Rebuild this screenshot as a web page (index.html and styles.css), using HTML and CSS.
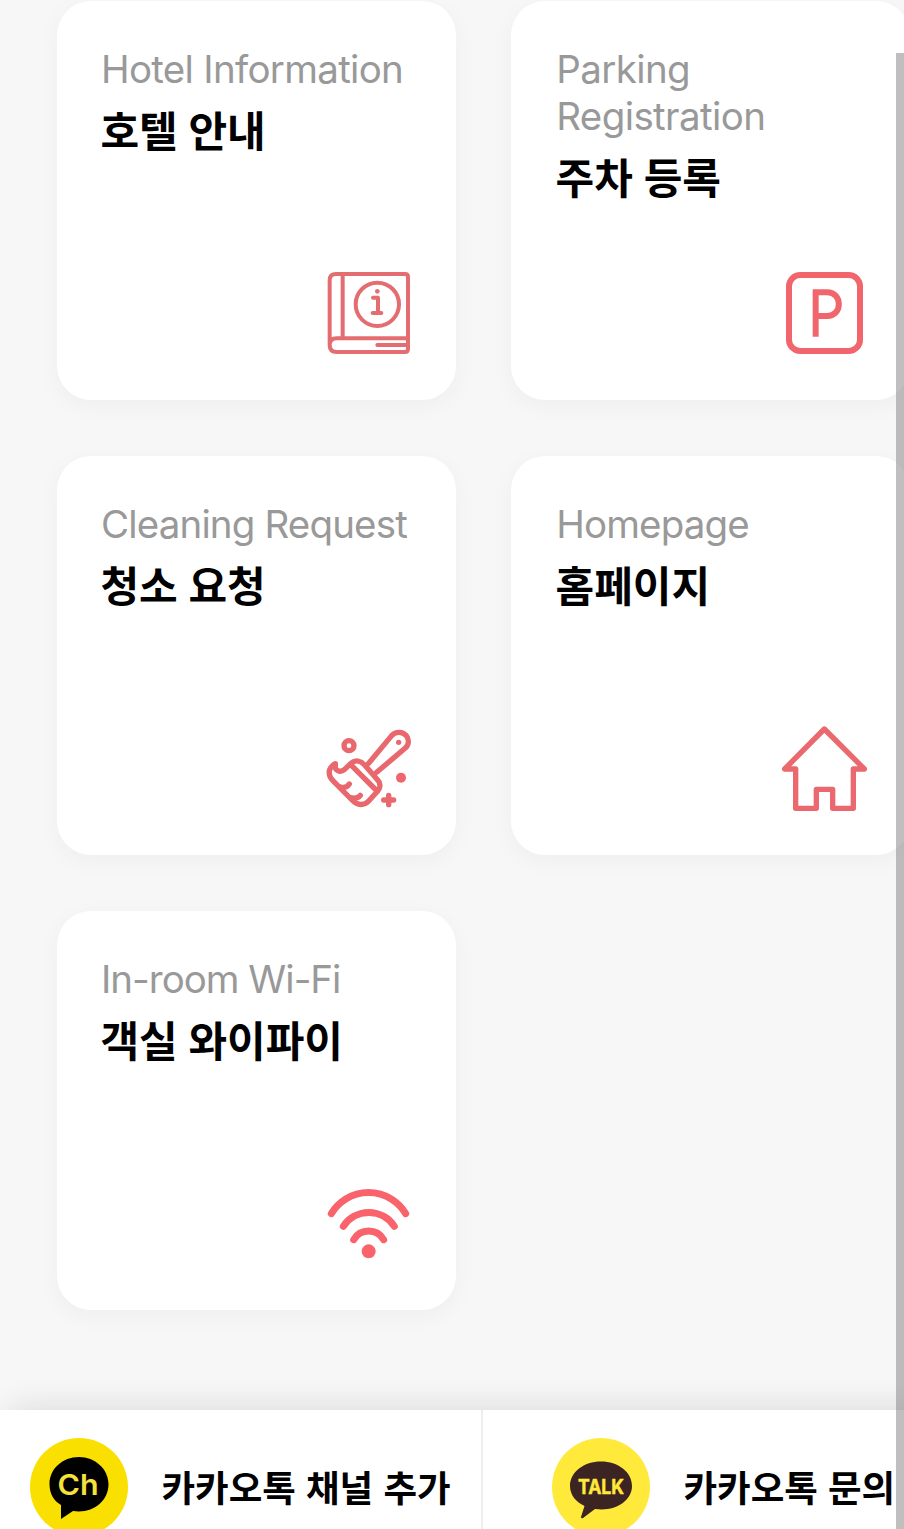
FILE: index.html
```html
<!DOCTYPE html>
<html lang="ko">
<head>
<meta charset="utf-8">
<title>호텔 안내</title>
<link rel="stylesheet" href="styles.css">
</head>
<body>
<div class="page">
  <main class="cards">
    <a class="card">
      <span class="sub sub-hotel">Hotel Information</span>
      <strong class="title">호텔 안내</strong>
      <svg class="icon" viewBox="48 48 258 258" fill="none" stroke="#e46d72" stroke-width="12" stroke-linecap="round" stroke-linejoin="round">
        <path d="M59 270V76Q59 57 78 57H285Q294 57 294 66V282Q294 291 285 291H80Q59 291 59 270Q59 250 80 250H293M98 58V249M202 270H292"/>
        <circle cx="202" cy="148" r="65"/>
        <path d="M189 128H204V174M188 174H214"/>
        <circle cx="202" cy="109" r="7" fill="#e46d72" stroke="none"/>
      </svg>
    </a>
    <a class="card">
      <span class="sub sub-parking">Parking<br>Registration</span>
      <strong class="title">주차 등록</strong>
      <svg class="icon" viewBox="48 48 258 258" fill="none" stroke="#f0666c" stroke-width="18">
        <rect x="72" y="60" width="213" height="228" rx="34"/>
        <path d="M152 245V112H187C233 112 233 183 187 183H152"/>
      </svg>
    </a>
    <a class="card">
      <span class="sub sub-cleaning">Cleaning Request</span>
      <strong class="title">청소 요청</strong>
      <svg class="icon" viewBox="48 48 258 258" fill="none" stroke="#e9686e" stroke-width="16" stroke-linecap="round" stroke-linejoin="round">
        <circle cx="117" cy="107" r="15"/>
        <path d="M175 161L245 77C258 63 278 65 289 77C298 89 297 104 285 115L200 187"/>
        <circle cx="266" cy="97" r="8" fill="#e9686e" stroke="none"/>
        <path d="M76 161C53 174 53 195 68 211L126 270C143 288 163 287 176 273L204 242C212 233 212 219 203 210L164 165C152 152 136 149 124 159L103 179C93 187 80 184 76 174Z"/>
        <path d="M125 167L195 237M91 231C102 234 112 231 118 222M121 263C134 266 145 264 151 256"/>
        <circle cx="273" cy="203" r="15" fill="#f0666c" stroke="none"/>
        <path d="M236 256V284M221 270H251"/>
      </svg>
    </a>
    <a class="card">
      <span class="sub sub-home">Homepage</span>
      <strong class="title">홈페이지</strong>
      <svg class="icon" viewBox="48 48 258 258" fill="none" stroke="#ea686e" stroke-width="16" stroke-linecap="round" stroke-linejoin="round">
        <path d="M178 57L59 177H92V295H154V238H203V295H265V177H298Z"/>
      </svg>
    </a>
    <a class="card">
      <span class="sub sub-wifi">In-room Wi-Fi</span>
      <strong class="title">객실 와이파이</strong>
      <svg class="icon" viewBox="48 48 258 258" fill="none" stroke="#f9636b" stroke-width="21" stroke-linecap="round">
        <path d="M64 146A130 130 0 0 1 287 146M100 184A91 91 0 0 1 253 184M131 224A52 52 0 0 1 221 224"/>
        <circle cx="176" cy="259" r="21" fill="#f9636b" stroke="none"/>
      </svg>
    </a>
  </main>
  <footer class="bar">
    <a class="link">
      <svg class="logo" viewBox="0 0 98 98">
        <circle cx="49" cy="49" r="49" fill="#f9e000"/>
        <path d="M49 19C32.500 19 19.500 31 19.500 46C19.500 56 24 63 31 67V81L43 73C62 76 78.500 64 78.500 46C78.500 31 65 19 49 19Z" fill="#000"/>
        <text class="logo-ch" x="48" y="56.500" text-anchor="middle" textLength="41" lengthAdjust="spacingAndGlyphs">Ch</text>
      </svg>
      <span class="label">카카오톡 채널 추가</span>
    </a>
    <a class="link link-talk">
      <svg class="logo" viewBox="0 0 98 98">
        <circle cx="49" cy="49" r="49" fill="#ffe93b"/>
        <path d="M49 23.500C32 23.500 18 34 18 48C18 57 24 64 32.500 68L29 79Q29 81 31 80L43 71C63 74 80 63 80 48C80 34 66 23.500 49 23.500Z" fill="#3c2422"/>
        <text class="logo-talk" x="49" y="55.500" text-anchor="middle" textLength="46" lengthAdjust="spacingAndGlyphs">TALK</text>
      </svg>
      <span class="label">카카오톡 문의</span>
    </a>
  </footer>
</div>
<div class="scrollbar"></div>
</body>
</html>
```
FILE: styles.css
```css
* {
  box-sizing: border-box;
}

html,
body {
  margin: 0;
  height: 1529px;
  overflow: hidden;
  background: #f7f7f7;
}

.page {
  width: 904px;
  height: 1549px;
  display: flex;
  flex-direction: column;
  justify-content: space-between;
  overflow: hidden;
  font-family: Inter, "Noto Sans CJK KR", sans-serif;
}

.cards {
  display: grid;
  grid-template-columns: 399px 399px;
  grid-auto-rows: 399.6px;
  gap: 55.4px;
  padding: 0.8px 0 0 57px;
}

.card {
  display: flex;
  flex-direction: column;
  padding: 45px 44px 43.6px;
  border-radius: 34px;
  background: #fff;
  box-shadow: 0 6px 24px rgba(0, 0, 0, 0.04);
}

.card:nth-child(even) {
  padding-left: 44.8px;
  padding-right: 43.2px;
}

.sub {
  color: #999;
  font-size: 38.5px;
  font-weight: 380;
  line-height: 47px;
  letter-spacing: -0.7px;
  white-space: nowrap;
}

.sub-parking {
  letter-spacing: -0.6px;
}

.sub-cleaning {
  letter-spacing: -0.85px;
}

.sub-home {
  letter-spacing: -0.85px;
}

.sub-wifi {
  letter-spacing: -1px;
}

.title {
  margin: 7px 0 0 -0.6px;
  color: #000;
  font-family: "Noto Sans CJK KR", sans-serif;
  font-size: 42px;
  font-weight: 700;
  line-height: 58px;
  word-spacing: -1px;
  white-space: nowrap;
}

.icon {
  width: 86px;
  height: 86px;
  margin-top: auto;
  align-self: flex-end;
}

.bar {
  display: flex;
  width: 966px;
  height: 139px;
  background: #fff;
  box-shadow: 10px 0 32px rgba(0, 20, 10, 0.14);
}

.link {
  display: flex;
  align-items: flex-start;
  gap: 33.5px;
  width: 483px;
  padding: 28px 0 0 30px;
  border-right: 2px solid #eee;
}

.link-talk {
  padding-left: 69px;
  border-right: 0;
}

.logo {
  flex: none;
  width: 98px;
  height: 98px;
}

.logo-ch,
.logo-talk {
  font-family: Inter, sans-serif;
}

.logo-ch {
  font-size: 29px;
  font-weight: 600;
  fill: #f5e13c;
}

.logo-talk {
  font-size: 20px;
  font-weight: 700;
  fill: #ffe93b;
  stroke: #ffe93b;
  stroke-width: 0.5px;
  stroke-linejoin: round;
}

.label {
  color: #000;
  font-family: "Noto Sans CJK KR", sans-serif;
  font-size: 36.5px;
  font-weight: 700;
  line-height: 98px;
  white-space: nowrap;
}

.scrollbar {
  position: fixed;
  top: 53px;
  right: 0;
  bottom: 0;
  width: 8px;
  background: rgba(128, 128, 128, 0.5);
}
```
